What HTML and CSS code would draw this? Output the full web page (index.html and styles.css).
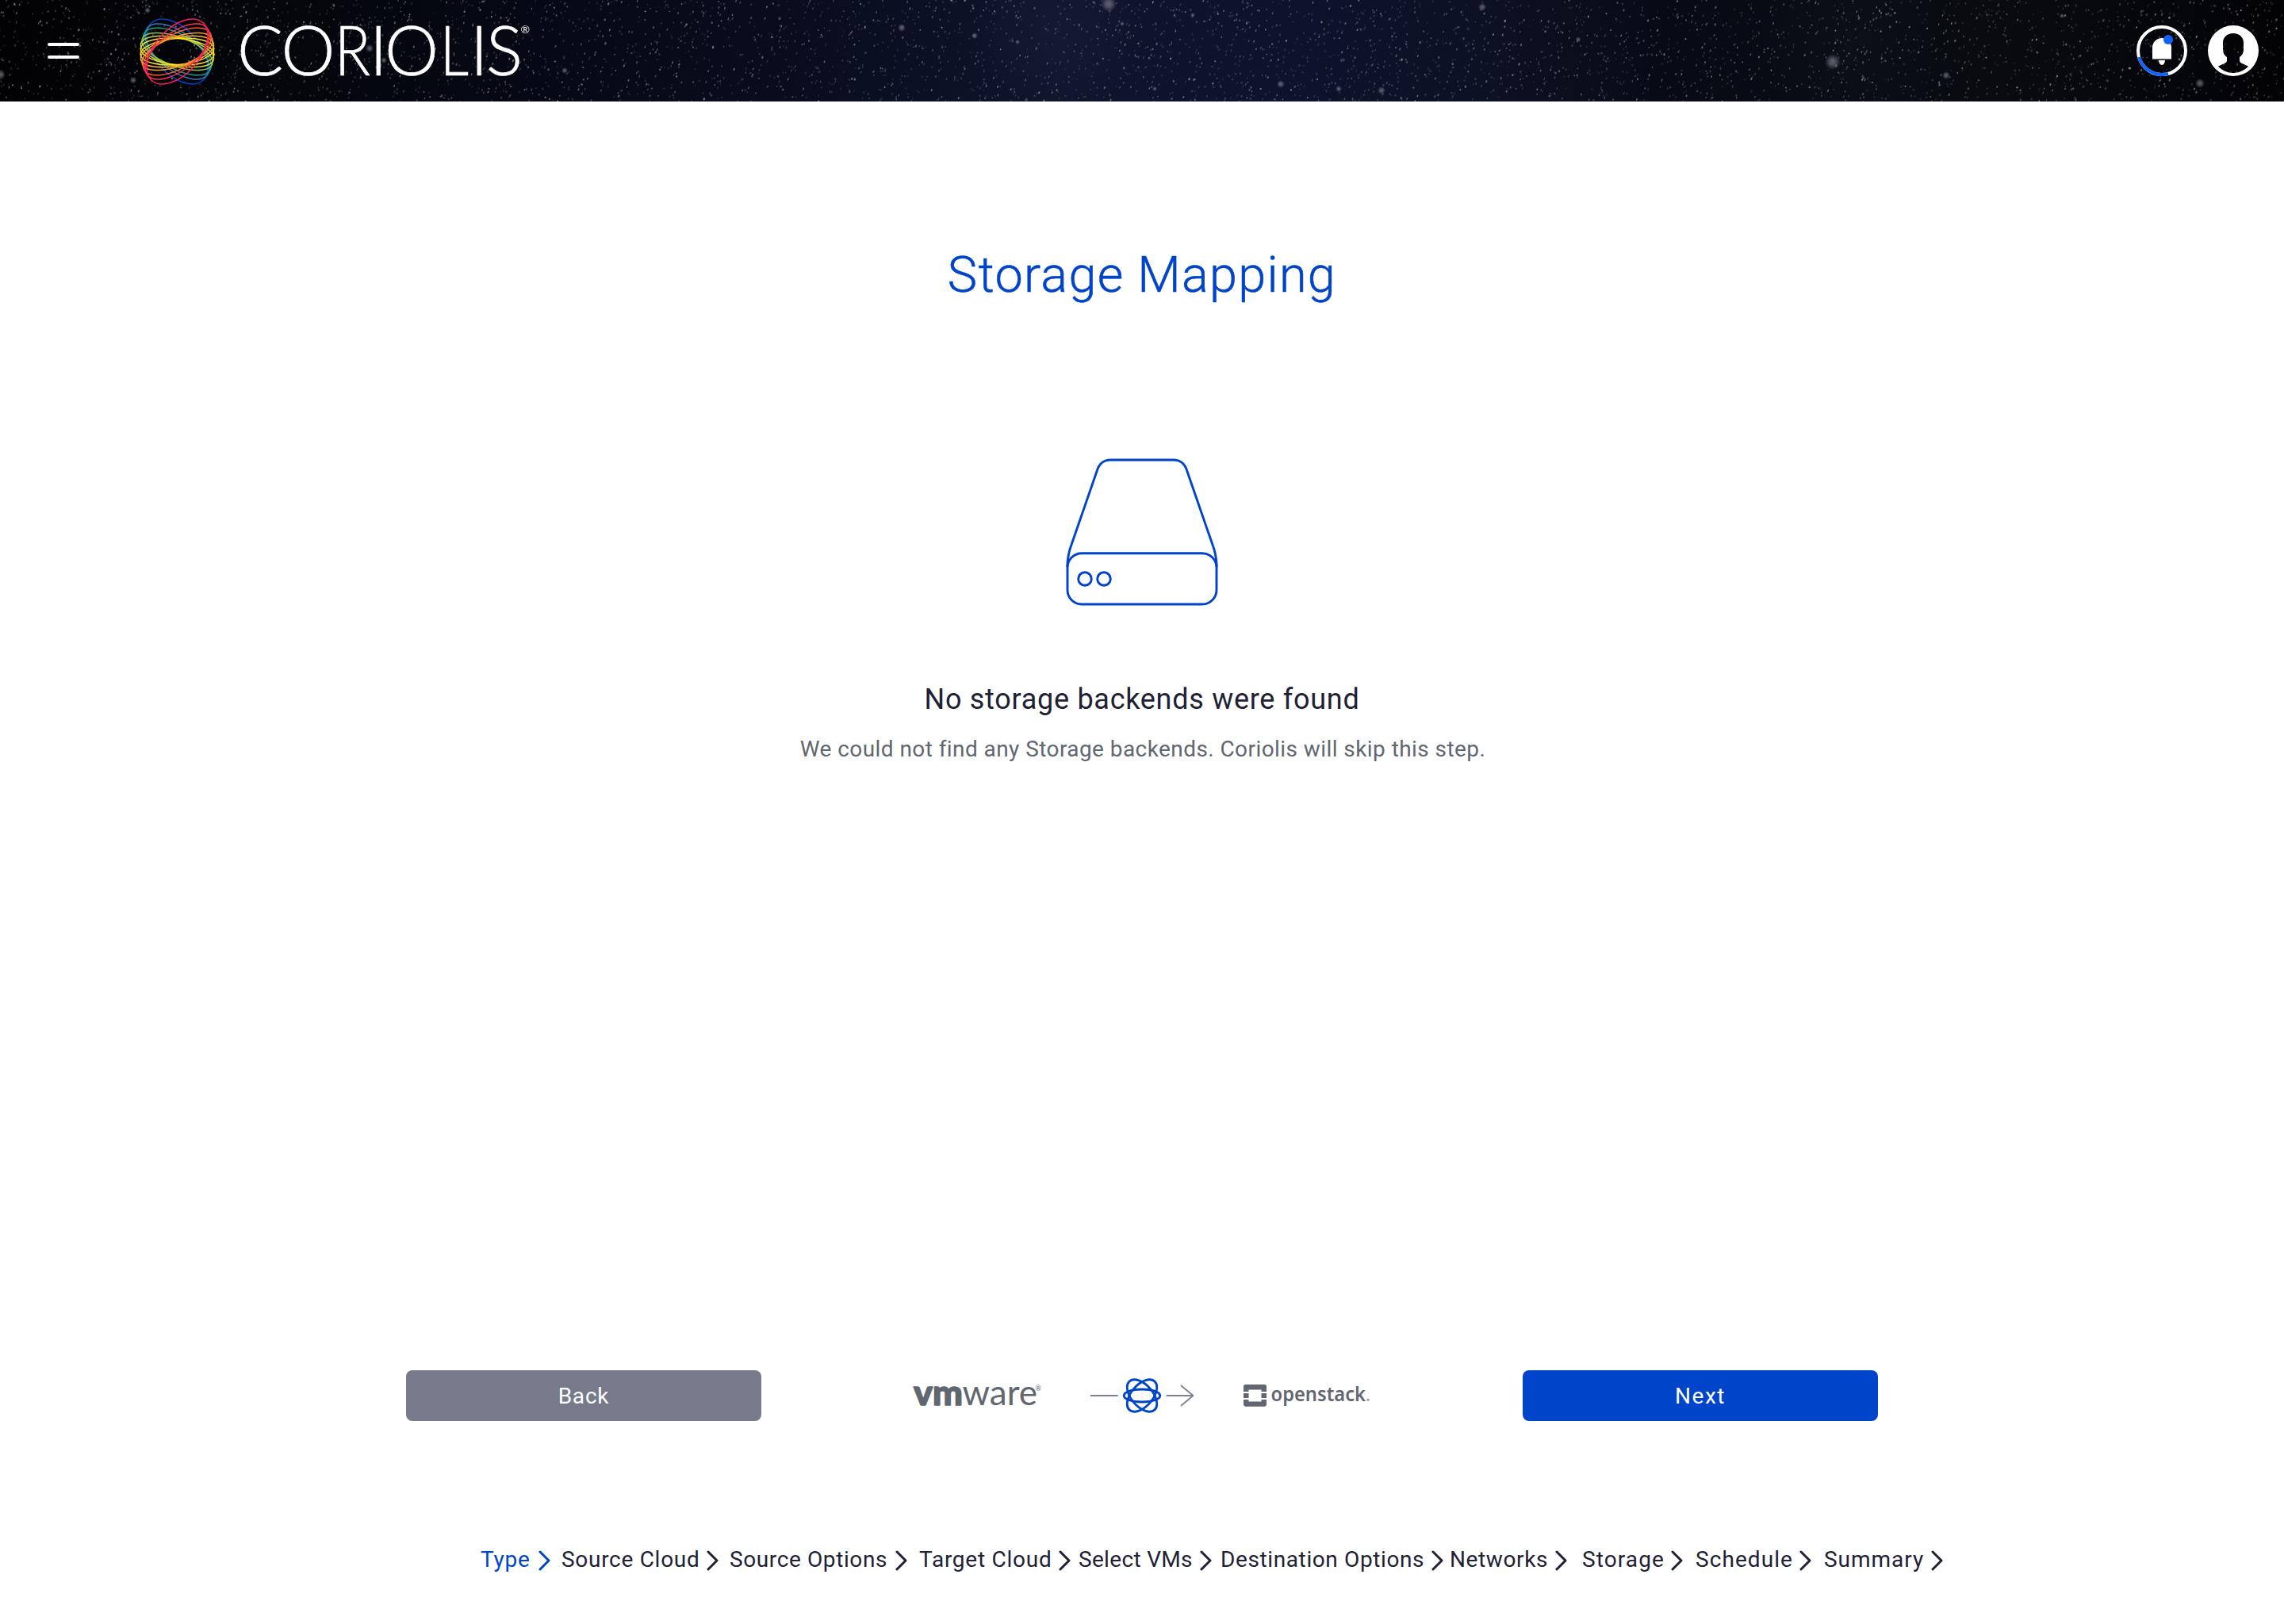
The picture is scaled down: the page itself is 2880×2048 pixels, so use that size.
FILE: index.html
```html
<!DOCTYPE html>
<html lang="en">
<head>
<meta charset="utf-8">
<title>Coriolis</title>
<link rel="stylesheet" href="styles.css">
</head>
<body>
<header class="topbar">
  <canvas class="sky" id="sky" width="2880" height="128"></canvas>
  <div class="brand">
    <svg class="menu" width="40" height="20" viewBox="0 0 40 20"><path d="M2 2H38M2 18H38" stroke="#fff" stroke-width="4" stroke-linecap="round"/></svg>
    <svg class="logo" width="510" height="128" viewBox="170 0 510 128">
      <g fill="none" stroke-width="1.500" transform="translate(223.500 65)">
        <ellipse rx="48.6" ry="28.2" transform="rotate(48.6)" stroke="#0044ca"/>
        <ellipse rx="48" ry="23.8" transform="rotate(38)" stroke="#2f7ab8"/>
        <ellipse rx="47.5" ry="21.6" transform="rotate(29)" stroke="#16a085"/>
        <ellipse rx="47" ry="18.4" transform="rotate(20)" stroke="#8bc34a"/>
        <ellipse rx="47" ry="17.6" transform="rotate(12)" stroke="#c6d93a"/>
        <ellipse rx="46.5" ry="16.6" transform="rotate(5)" stroke="#ffe11b"/>
        <ellipse rx="46.5" ry="16.6" transform="rotate(-5)" stroke="#ffe11b"/>
        <ellipse rx="47" ry="17.6" transform="rotate(-12)" stroke="#ffb92b"/>
        <ellipse rx="47" ry="18.4" transform="rotate(-20)" stroke="#ff9a2e"/>
        <ellipse rx="47.5" ry="21.6" transform="rotate(-29)" stroke="#ff5a2c"/>
        <ellipse rx="48" ry="23.8" transform="rotate(-38)" stroke="#f8324f"/>
        <ellipse rx="48.6" ry="28.2" transform="rotate(-48.6)" stroke="#ff1762"/>
      </g>
      <text class="wordmark" y="94.5"><tspan x="299">C</tspan><tspan x="354.500">O</tspan><tspan x="422" textLength="45" lengthAdjust="spacingAndGlyphs">R</tspan><tspan x="466">I</tspan><tspan x="485">O</tspan><tspan x="555" textLength="36" lengthAdjust="spacingAndGlyphs">L</tspan><tspan x="593">I</tspan><tspan x="613">S</tspan></text>
      <text class="reg" x="656.5" y="42">®</text>
    </svg>
  </div>
  <div class="user">
    <svg width="64" height="64" viewBox="0 0 64 64">
      <circle cx="32" cy="32" r="30" fill="none" stroke="#fff" stroke-width="4"/>
      <path d="M3.1 40A30 30 0 0 0 40 60.9" fill="none" stroke="#0f62fe" stroke-width="4"/>
      <path d="M20 42V28a12 12 0 0 1 24 0V42ZM28 44H36a4 6 0 0 1-8 0Z" fill="#fff"/>
      <path d="M20 42.4H44" stroke="#999" stroke-width="1"/>
      <circle cx="40" cy="18" r="6" fill="#0f62fe"/>
    </svg>
    <svg width="64" height="64" viewBox="0 0 64 64">
      <path fill="#fff" fill-rule="evenodd" d="M32 0a32 32 0 1 1 0 64a32 32 0 1 1 0-64ZM32 10C24 10 19 15 19 22V30C19 35 21 38 24 40V44C24 47 22 47.500 13 51.500C18 57 25 60 32 60S46 57 51 51.500C42 47.500 40 47 40 44V40C43 38 45 35 45 30V22C45 15 40 10 32 10Z"/>
    </svg>
  </div>
</header>
<main class="content">
  <h1 class="title">Storage Mapping</h1>
  <svg class="drive" width="240" height="220" viewBox="0 0 240 220" fill="none" stroke="#0044ca" stroke-width="2.900">
    <rect x="26" y="137.700" width="188" height="64.300" rx="18"/>
    <path d="M25.700 155C26 146 27.500 136 31 127L63.500 33C66 25 72 20 80 20H160C168 20 174 25 176.500 33L209 127C212.500 136 214 146 214.300 155"/>
    <circle cx="48" cy="170" r="8.300"/><circle cx="72" cy="170" r="8.300"/>
  </svg>
  <h2 class="message">No storage backends were found</h2>
  <p class="hint">We could not find any Storage backends. Coriolis will skip this step.</p>
</main>
<div class="actions">
  <button class="btn back">Back</button>
  <div class="route">
    <svg width="162" height="64" viewBox="1151 1728 162 64" fill="#616770">
      <text class="vm" x="1152" y="1772" textLength="62" lengthAdjust="spacingAndGlyphs">vm</text>
      <text class="ware" x="1213.500" y="1772">ware</text>
      <text class="tm" x="1305.500" y="1753.500">®</text>
    </svg>
    <svg width="132" height="64" viewBox="1374 1728 132 64" fill="none">
      <path d="M1375.500 1760H1409M1471.500 1760H1504.500M1489.500 1747.500L1504.500 1760L1489.500 1772.500" stroke="#7a8194" stroke-width="1.800" stroke-linecap="round" stroke-linejoin="round"/>
      <g stroke="#0044ca" stroke-width="2.800" transform="translate(1440 1760)">
        <ellipse rx="22.800" ry="8"/>
        <ellipse rx="24" ry="13.500" transform="rotate(49)"/>
        <ellipse rx="24" ry="13.500" transform="rotate(-49)"/>
      </g>
    </svg>
    <svg width="162" height="64" viewBox="1567 1728 162 64" fill="#616770">
      <path d="M1570.500 1746H1594.500Q1597 1746 1597 1748.500V1755H1590.500V1752.500H1574.500V1755H1568V1748.500Q1568 1746 1570.500 1746ZM1568 1757H1574.500V1763H1568ZM1590.500 1757H1597V1763H1590.500ZM1568 1765H1574.500V1767.500H1590.500V1765H1597V1771.300Q1597 1773.700 1594.500 1773.700H1570.500Q1568 1773.700 1568 1771.300Z"/>
      <text class="openstack" x="1602.500" y="1767"><tspan textLength="119.500" lengthAdjust="spacingAndGlyphs">openstack</tspan><tspan class="dot">.</tspan></text>
    </svg>
  </div>
  <button class="btn next">Next</button>
</div>
<nav class="steps">
  <div class="step active s-type"><span>Type</span><svg class="chev"><use href="#chev"/></svg></div>
  <div class="step s-source"><span>Source Cloud</span><svg class="chev"><use href="#chev"/></svg></div>
  <div class="step s-srcopt"><span>Source Options</span><svg class="chev"><use href="#chev"/></svg></div>
  <div class="step s-target"><span>Target Cloud</span><svg class="chev"><use href="#chev"/></svg></div>
  <div class="step s-vms"><span>Select VMs</span><svg class="chev"><use href="#chev"/></svg></div>
  <div class="step s-dest"><span>Destination Options</span><svg class="chev"><use href="#chev"/></svg></div>
  <div class="step s-net"><span>Networks</span><svg class="chev"><use href="#chev"/></svg></div>
  <div class="step s-stor"><span>Storage</span><svg class="chev"><use href="#chev"/></svg></div>
  <div class="step s-sched"><span>Schedule</span><svg class="chev"><use href="#chev"/></svg></div>
  <div class="step s-sum"><span>Summary</span><svg class="chev"><use href="#chev"/></svg></div>
</nav>
<svg class="defs" width="0" height="0"><symbol id="chev" viewBox="0 0 16 28"><path d="M2 3L13 14L2 25" fill="none" stroke="currentColor" stroke-width="3" stroke-linecap="round" stroke-linejoin="round"/></symbol></svg>
<script src="sky.js"></script>
</body>
</html>
```
FILE: styles.css
```css
* { box-sizing: border-box; }
body {
  margin: 0;
  height: 2048px;
  display: flex;
  flex-direction: column;
  background: #fff;
  color: #202134;
  font-family: Roboto, "Noto Sans", sans-serif;
  font-size: 28px;
}
.topbar {
  position: relative;
  height: 128px;
  flex: none;
  display: flex;
  justify-content: space-between;
  align-items: center;
  padding: 0 32px 0 60px;
  background: #05060c;
}
.sky { position: absolute; inset: 0; }
.brand, .user { position: relative; display: flex; align-items: center; }
.brand { gap: 70px; }
.user { gap: 26px; }
svg { display: block; }
.wordmark { font: 300 86px Lato, sans-serif; fill: #fff; stroke: #fff; stroke-width: .7px; }
.reg { font: 400 14px Lato, sans-serif; fill: #fff; }
.content {
  height: 1600px;
  flex: none;
  display: flex;
  flex-direction: column;
  align-items: center;
}
.title {
  margin: 181px 0 0;
  font-size: 63px;
  line-height: 76px;
  font-weight: 300;
  letter-spacing: 1.29px;
  color: #0044ca;
  -webkit-text-stroke: .5px #0044ca;
}
.drive { margin-top: 175px; }
.message {
  margin: 80px 0 0;
  font-size: 36px;
  line-height: 44px;
  font-weight: 400;
  letter-spacing: .72px;
}
.hint {
  margin: 24px 0 0;
  padding-left: 2px;
  line-height: 34px;
  letter-spacing: .43px;
  color: #616770;
}
.actions {
  flex: none;
  height: 64px;
  padding: 0 512px;
  display: flex;
  justify-content: space-between;
}
.btn {
  width: 448px;
  height: 64px;
  border: 0;
  border-radius: 8px;
  padding: 0;
  color: #fff;
  font: 400 28px Roboto, sans-serif;
}
.back { background: #777a8b; letter-spacing: .8px; }
.next { background: #0044ca; letter-spacing: 1.5px; }
.route { display: flex; gap: 61px; }
.vm { font: 900 44px Lato, sans-serif; stroke: #616770; stroke-width: 1.5px; stroke-linejoin: round; }
.ware { font: 400 44px Lato, sans-serif; }
.tm { font: 400 9px Lato, sans-serif; }
.openstack { font: 600 26px "Noto Sans", sans-serif; }
.dot { font-size: 22px; fill: #a4a8ae; }
.steps {
  flex: none;
  display: flex;
  margin-top: 158px;
  padding-left: 606px;
  line-height: 34px;
  white-space: nowrap;
}
.step { display: flex; justify-content: space-between; align-items: center; }
.chev { width: 16px; height: 28px; margin-top: 2px; }
.active { color: #0044ca; }
.s-type { width: 89px; letter-spacing: .77px; margin-right: 13px; }
.s-source { width: 199px; letter-spacing: .71px; margin-right: 13px; }
.s-srcopt { width: 225px; letter-spacing: .61px; margin-right: 14px; }
.s-target { width: 192px; letter-spacing: .75px; margin-right: 9px; }
.s-vms { width: 169px; letter-spacing: .32px; margin-right: 10px; }
.s-dest { width: 282px; letter-spacing: .61px; margin-right: 7px; }
.s-net { width: 149px; letter-spacing: .62px; margin-right: 18px; }
.s-stor { width: 128px; letter-spacing: 1.1px; margin-right: 15px; }
.s-sched { width: 147px; letter-spacing: 1.06px; margin-right: 15px; }
.s-sum { width: 151px; letter-spacing: .98px; }
.defs { position: absolute; }
```
FILE: sky.js
```js
// Paints the night sky behind the top bar.
const ctx = document.getElementById('sky').getContext('2d');
const base = ctx.createLinearGradient(0, 0, 2880, 0);
[[0, '#020204'], [.12, '#05060b'], [.25, '#060916'], [.36, '#090d1f'], [.46, '#0e142b'],
 [.56, '#0d132c'], [.65, '#0c1124'], [.73, '#080a15'], [.82, '#0a0c13'], [.9, '#080a10'],
 [.95, '#05060c'], [1, '#030305']].forEach(([p, c]) => base.addColorStop(p, c));
ctx.fillStyle = base;
ctx.fillRect(0, 0, 2880, 128);

function glow(x, y, r, rgb, a) {
  const g = ctx.createRadialGradient(x, y, 0, x, y, r);
  g.addColorStop(0, `rgba(${rgb},${a})`);
  g.addColorStop(.4, `rgba(${rgb},${a * .75})`);
  g.addColorStop(1, `rgba(${rgb},0)`);
  ctx.fillStyle = g;
  ctx.fillRect(x - r, y - r, 2 * r, 2 * r);
}
glow(1330, 40, 110, '70,75,100', .1);
glow(2330, 50, 120, '60,65,80', .06);

let seed = 7;
const rnd = () => (seed = (seed * 16807) % 2147483647) / 2147483647;
for (let i = 0; i < 4200; i++) {
  const x = rnd() * 2880, y = rnd() * 128, a = .18 + rnd() * rnd() * .7;
  ctx.fillStyle = `rgba(150,152,170,${a})`;
  ctx.beginPath();
  ctx.ellipse(x, y, .6 + rnd() * .6, .8 + rnd() * 1, .4, 0, 7);
  ctx.fill();
}
[[1398, 5, 10], [1137, 35, 5], [1229, 45, 4], [1283, 53, 3], [1869, 9, 5], [1990, 50, 3.500],
 [2311, 78, 10], [2454, 95, 5], [1615, 106, 5], [1742, 114, 5], [1456, 112, 3], [1504, 19, 3],
 [1415, 30, 3], [1688, 112, 4], [0, 94, 7], [168, 101, 4.500], [186, 13, 4], [466, 61, 5],
 [484, 76, 4], [712, 89, 4], [2774, 105, 6], [2600, 20, 3]
].forEach(([x, y, r]) => glow(x, y, r, '130,130,148', .7));
```
